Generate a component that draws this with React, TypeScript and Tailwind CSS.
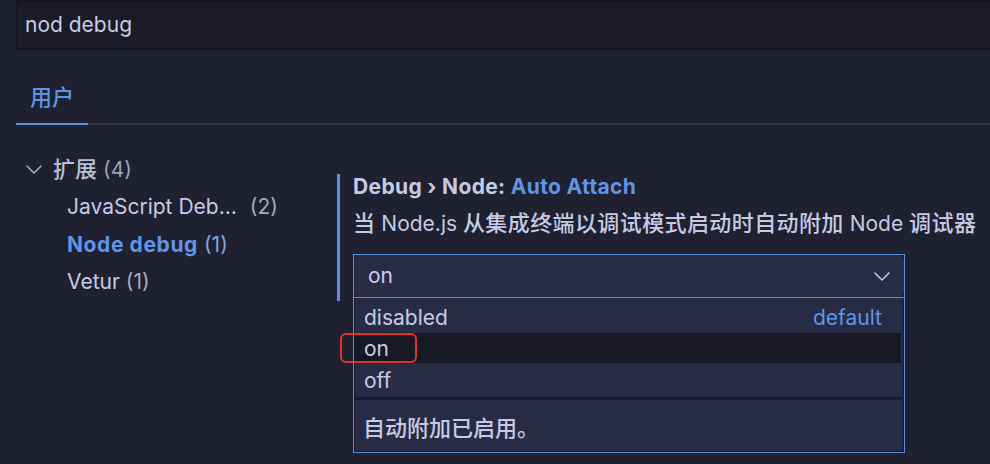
import React from "react";

const font = { fontFamily: '"Inter", "Noto Sans CJK SC", sans-serif' };

function Chevron({ className }: { className?: string }) {
  return (
    <svg className={className} width="16" height="9" viewBox="0 0 16 9" fill="none">
      <path d="M1 1l7 7 7-7" stroke="currentColor" strokeWidth="1.5" strokeLinecap="round" strokeLinejoin="round" />
    </svg>
  );
}

export default function App() {
  return (
    <div
      className="w-[990px] h-[464px] overflow-hidden bg-[#1f2030] text-[21px] text-[#c5cbe3] antialiased"
      style={font}
    >
      {/* search */}
      <div className="pl-4">
        <div className="h-[50px] bg-[#1a1b27] border-2 border-r-0 border-t-[#16161f] border-l-[#17171f] border-b-[#15151d] flex items-center pl-[7px] text-[#c7cde5]">
          nod debug
        </div>
      </div>

      {/* tabs */}
      <div className="pl-4 h-[75px] flex items-end">
        <div className="w-[72px] text-center leading-[28px] pb-[12px] border-b-2 border-[#5b8fdc] text-[#5f95e9] text-[22px] font-medium">
          用户
        </div>
        <div className="flex-1 border-b-2 border-[#33343f]" />
      </div>

      {/* body */}
      <div className="flex">
        <div className="w-[337px] pt-[26px]">
          <div className="flex items-center h-[37px] pl-[26px]">
            <Chevron className="text-[#aab0c8] mr-[11px]" />
            <span className="text-[#b9bfd6] text-[22px] font-medium">扩展</span>
            <span className="ml-[6px] text-[#9ca2ba]">(4)</span>
          </div>
          <div className="flex items-center h-[38px] pl-[67px]">
            <span className="text-[#c5cbe3]">JavaScript Deb…</span>
            <span className="ml-[13px] text-[#a4aac2]">(2)</span>
          </div>
          <div className="flex items-center h-[37px] pl-[67px]">
            <span className="font-bold text-[#5f95e9] tracking-[0.6px]">Node debug</span>
            <span className="ml-[6px] text-[#7fa3e2]">(1)</span>
          </div>
          <div className="flex items-center h-[38px] pl-[67px]">
            <span className="text-[#c5cbe3]">Vetur</span>
            <span className="ml-[6px] text-[#a4aac2]">(1)</span>
          </div>
        </div>

        <div className="flex-1 pt-[49px]">
          <div className="border-l-[3px] border-[#5b8fdc] pl-[13px] pb-[3px]">
            <div className="leading-[25px] font-bold text-[21px] whitespace-nowrap tracking-[0.35px]">
              <span className="text-[#c5cbe3]">Debug › Node: </span>
              <span className="text-[#5f95e9]">Auto Attach</span>
            </div>
            <div className="leading-[24px] mt-[12px] text-[#c5cbe3] whitespace-nowrap">
              <span className="text-[22px] font-medium tracking-[0.4px]">当</span> Node.js{" "}
              <span className="text-[22px] font-medium tracking-[0.4px]">从集成终端以调试模式启动时自动附加</span> Node{" "}
              <span className="text-[22px] font-medium tracking-[0.4px]">调试器</span>
            </div>
            <div className="relative mt-[18px] w-[552px]">
              <div className="h-[44px] border border-[#5b8fdc] bg-[#171828]">
                <div className="h-full rounded-[5px] bg-[#292c45] flex items-center justify-between pl-[14px] pr-[14px] text-[#c7cde5]">
                  <span>on</span>
                  <Chevron className="text-[#c5cbe3]" />
                </div>
              </div>
              {/* dropdown */}
              <div className="absolute left-0 top-full w-full z-10 border border-t-0 border-[#5b8fdc] bg-[#282b44]">
                <div className="border border-t-0 border-[#181a2c] pr-[2px]">
                  <div className="h-[35px] flex items-center justify-between pl-[9px] pr-[19px] pt-[5px]">
                    <span className="text-[#c5cbe3]">disabled</span>
                    <span className="text-[#5f95e9]">default</span>
                  </div>
                  <div className="relative h-[30px] flex items-center pl-[9px] pt-[2px] bg-[#181824]">
                    <span className="text-[#c7cde5]">on</span>
                    <div className="absolute left-[-15px] top-0 w-[77px] h-[30px] border-2 border-[#e0302f] rounded-[6px]" />
                  </div>
                  <div className="h-[34px] flex items-center pl-[9px] pt-[2px]">
                    <span className="text-[#c5cbe3]">off</span>
                  </div>
                </div>
                <div className="h-[2px] bg-[#1a1b2b]" />
                <div className="h-[52px] flex items-center pl-[8px] pt-[5px] border border-t-0 border-[#181a2c] text-[#c5cbe3] text-[22px] font-medium">
                  自动附加已启用。
                </div>
              </div>
            </div>
          </div>
        </div>
      </div>
    </div>
  );
}
